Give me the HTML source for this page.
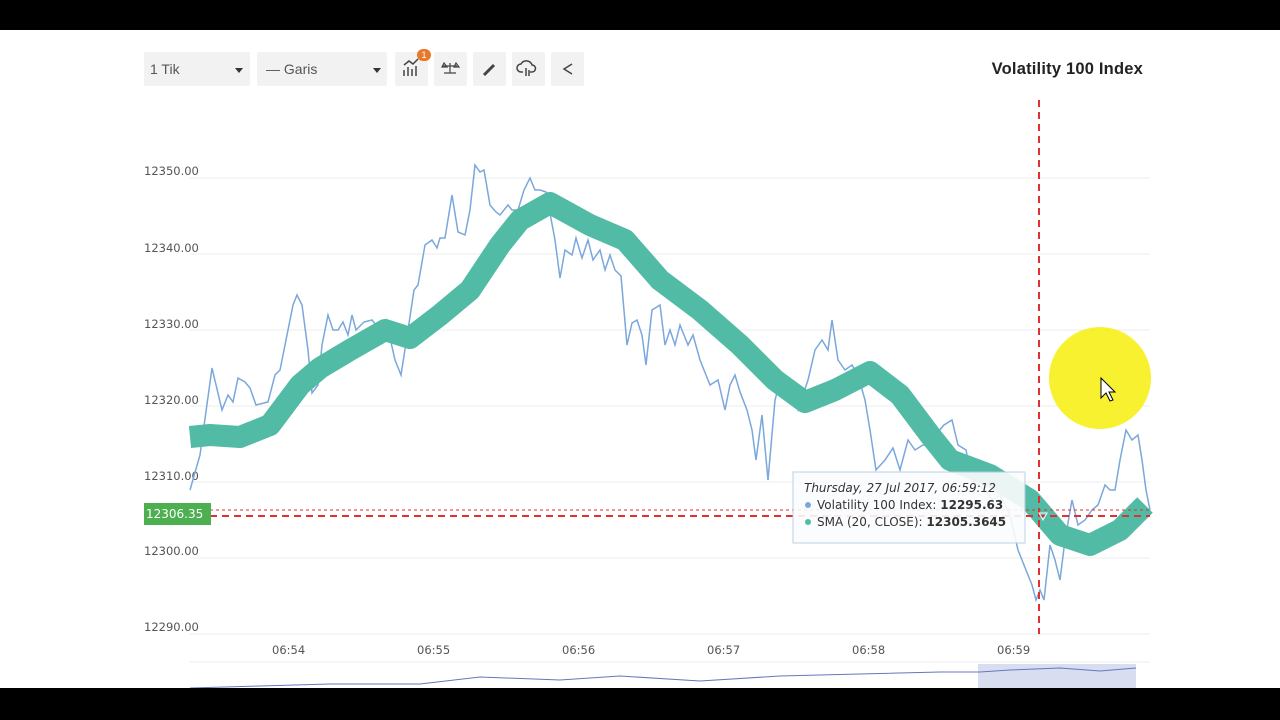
<!DOCTYPE html>
<html><head><meta charset="utf-8"><style>
html,body{margin:0;padding:0;background:#000;width:1280px;height:720px;overflow:hidden;font-family:"Liberation Sans",sans-serif}
#p{position:absolute;left:0;top:30px;width:1280px;height:658px;background:#fff}
.btn{position:absolute;top:22px;height:34px;background:#f2f2f2;border-radius:2px}
.t{position:absolute;font-size:14px;color:#555}
</style></head><body>
<div style="position:absolute;left:0;top:0;width:1280px;height:30px;background:#000"></div>
<div id="p">
<div class="btn" style="left:144px;width:106px"></div>
<div class="t" style="left:150px;top:31px">1 Tik</div>
<div style="position:absolute;left:235px;top:38px;border:4px solid transparent;border-top:5px solid #333;border-bottom:0"></div>
<div class="btn" style="left:257px;width:130px"></div>
<div class="t" style="left:266px;top:31px">— Garis</div>
<div style="position:absolute;left:373px;top:38px;border:4px solid transparent;border-top:5px solid #333;border-bottom:0"></div>
<div class="btn" style="left:395px;width:33px"></div>
<div class="btn" style="left:434px;width:33px"></div>
<div class="btn" style="left:473px;width:33px"></div>
<div class="btn" style="left:512px;width:33px"></div>
<div class="btn" style="left:551px;width:33px"></div>
<div style="position:absolute;left:417px;top:19px;width:14px;height:12px;border-radius:6px;background:#e8782a;color:#fff;font-size:9px;text-align:center;line-height:12px">1</div>
<svg style="position:absolute;left:0;top:0" width="1280" height="658" viewBox="0 30 1280 658">
<g stroke="#444" stroke-width="1.5" fill="none">
<path d="M404 76v-6M408 76v-9M412 76v-7M416 76v-10M404 65l5-4 4 3 5-5"/>
<path d="M443 66h14M450 63v10M444 73h12M444 63l-2 4h5zM456 63l-2 4h5z" stroke-width="1.2"/>
<path d="M484 75l10-10" stroke-width="3"/>
<path d="M523 72h-2a4 4 0 0 1 0-8 6 6 0 0 1 11 1 3.5 3.5 0 0 1 0 7h-2M526 68v8M529 70v6"/>
<path d="M572 64l-8 5 8 5"/>
</g>
<g stroke="#ececec" stroke-width="1">
<line x1="190" y1="178" x2="1150" y2="178"/><line x1="190" y1="254" x2="1150" y2="254"/>
<line x1="190" y1="330" x2="1150" y2="330"/><line x1="190" y1="406" x2="1150" y2="406"/>
<line x1="190" y1="482" x2="1150" y2="482"/><line x1="190" y1="558" x2="1150" y2="558"/>
<line x1="190" y1="634" x2="1150" y2="634"/><line x1="190" y1="662" x2="1150" y2="662"/>
</g>
<g font-size="11.5" fill="#555" font-family="DejaVu Sans,sans-serif">
<text x="144" y="175">12350.00</text><text x="144" y="252">12340.00</text><text x="144" y="328">12330.00</text>
<text x="144" y="404">12320.00</text><text x="144" y="480">12310.00</text><text x="144" y="555">12300.00</text><text x="144" y="631">12290.00</text>
<text x="272" y="654">06:54</text><text x="417" y="654">06:55</text><text x="562" y="654">06:56</text><text x="707" y="654">06:57</text><text x="852" y="654">06:58</text><text x="997" y="654">06:59</text>
</g>
<path d="M190 490L200 455 212 368 222 410 228 395 233 402 238 378 245 382 250 388 256 405 268 402 275 375 280 370 285 345 293 305 297 295 302 305 308 350 312 393 318 385 322 345 328 315 333 330 338 330 343 322 348 335 352 315 356 330 364 322 372 320 380 330 386 320 395 360 401 375 408 330 414 290 418 285 425 245 432 240 437 248 440 238 445 238 452 195 458 232 465 235 470 210 475 165 480 172 484 170 490 205 496 212 500 215 508 205 512 210 518 210 524 190 530 178 535 190 540 190 546 192 555 240 560 278 565 250 572 255 576 238 582 258 588 240 593 260 600 250 605 270 610 255 615 270 621 276 627 345 632 323 637 320 642 335 646 365 652 310 660 305 665 345 670 330 675 345 680 325 688 345 693 335 700 360 710 385 718 380 725 410 730 385 735 375 740 392 747 410 752 430 756 460 762 415 768 480 775 400 782 375 790 390 798 410 808 380 815 350 822 340 828 350 832 320 838 360 845 370 852 365 858 375 865 400 870 430 876 470 885 460 893 448 900 470 908 440 915 450 923 445 930 445 938 432 944 425 952 420 958 445 966 450 972 480 985 490 992 500 1000 495 1010 515 1018 550 1026 570 1032 585 1036 600 1040 590 1044 600 1050 545 1055 560 1060 580 1065 540 1072 500 1078 525 1085 520 1092 510 1098 505 1105 485 1110 490 1115 490 1120 460 1126 430 1132 440 1138 435 1142 460 1146 490 1150 510" fill="none" stroke="#7aa7dc" stroke-width="1.5"/>
<path d="M190 437L210 435 240 437 270 425 300 385 320 368 350 350 385 330 410 338 440 315 470 290 500 245 520 220 550 203 590 225 625 240 660 280 700 310 740 345 775 380 805 402 835 390 870 372 900 395 930 435 950 460 990 475 1030 500 1060 535 1090 545 1120 530 1145 505" fill="none" stroke="#52bba5" stroke-width="22" stroke-linejoin="round"/>
<line x1="210" y1="516" x2="1150" y2="516" stroke="#e03030" stroke-width="2" stroke-dasharray="7,5"/>
<line x1="210" y1="510" x2="1150" y2="510" stroke="#e03030" stroke-width="1" stroke-dasharray="3,3"/>
<line x1="1039" y1="100" x2="1039" y2="634" stroke="#e03030" stroke-width="2" stroke-dasharray="7,5"/>
<path d="M1039 513l4 7 4-7z" fill="none" stroke="#fff" stroke-width="1"/>
<rect x="144" y="503" width="67" height="22" fill="#4caf50"/>
<text x="146" y="518" font-size="12" fill="#fff" font-family="DejaVu Sans,sans-serif">12306.35</text>
<rect x="793" y="472" width="232" height="71" fill="#fbfcfd" opacity="0.9" stroke="#b8cbe0"/>
<g font-size="12" font-family="DejaVu Sans,sans-serif" fill="#333">
<text x="804" y="492" font-style="italic">Thursday, 27 Jul 2017, 06:59:12</text>
<circle cx="808" cy="505" r="3" fill="#7aa7dc"/><text x="817" y="509">Volatility 100 Index: <tspan font-weight="bold">12295.63</tspan></text>
<circle cx="808" cy="522" r="3" fill="#52bba5"/><text x="817" y="526">SMA (20, CLOSE): <tspan font-weight="bold">12305.3645</tspan></text>
</g>
<rect x="978" y="664" width="158" height="24" fill="#c8cfe8" opacity="0.7"/>
<path d="M190 688L260 686 330 684 420 684 480 677 560 680 620 676 700 681 780 676 860 674 940 672 980 672 1010 670 1060 668 1100 671 1136 668" fill="none" stroke="#6677bb" stroke-width="1"/>
<circle cx="1100" cy="378" r="51" fill="#f7ef1a" opacity="0.9"/>
<path d="M1101 378v20l5-5 4 8 3-1-4-8h6z" fill="#fff" stroke="#000" stroke-width="1"/>
</svg>
<div style="position:absolute;right:137px;top:30px;font-size:16.5px;font-weight:bold;color:#222;letter-spacing:0.2px">Volatility 100 Index</div>
</div>
<div style="position:absolute;left:0;top:688px;width:1280px;height:32px;background:#000"></div>
</body></html>
